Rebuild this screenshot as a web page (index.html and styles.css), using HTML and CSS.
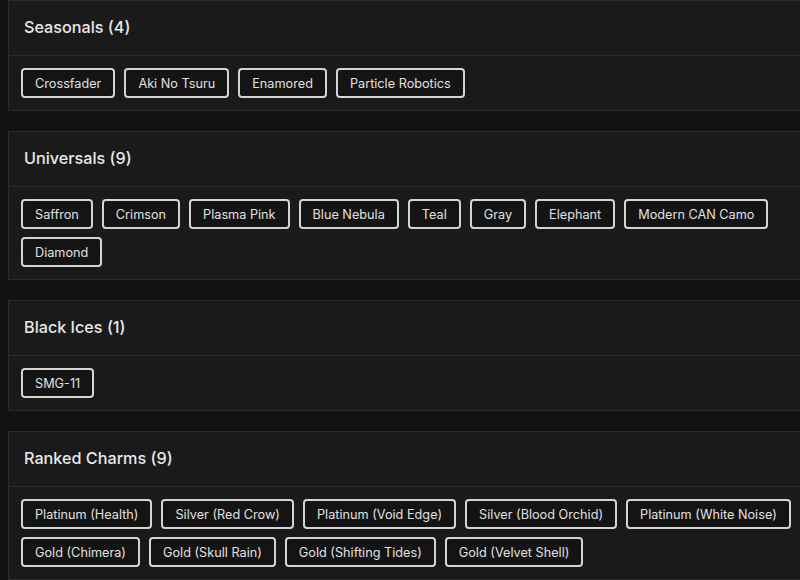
FILE: index.html
```html
<!DOCTYPE html>
<html lang="en">
<head>
<meta charset="utf-8">
<title>Collection</title>
<link rel="stylesheet" href="styles.css">
</head>
<body>
<main class="page">
  <section class="card">
    <header class="card-head"><h2 class="card-title">Seasonals (4)</h2></header>
    <div class="card-body">
      <span class="chip">Crossfader</span>
      <span class="chip">Aki No Tsuru</span>
      <span class="chip">Enamored</span>
      <span class="chip">Particle Robotics</span>
    </div>
  </section>
  <section class="card">
    <header class="card-head"><h2 class="card-title">Universals (9)</h2></header>
    <div class="card-body">
      <span class="chip">Saffron</span>
      <span class="chip">Crimson</span>
      <span class="chip">Plasma Pink</span>
      <span class="chip">Blue Nebula</span>
      <span class="chip">Teal</span>
      <span class="chip">Gray</span>
      <span class="chip">Elephant</span>
      <span class="chip">Modern CAN Camo</span>
      <span class="chip">Diamond</span>
    </div>
  </section>
  <section class="card">
    <header class="card-head"><h2 class="card-title">Black Ices (1)</h2></header>
    <div class="card-body">
      <span class="chip">SMG-11</span>
    </div>
  </section>
  <section class="card">
    <header class="card-head"><h2 class="card-title">Ranked Charms (9)</h2></header>
    <div class="card-body">
      <span class="chip">Platinum (Health)</span>
      <span class="chip">Silver (Red Crow)</span>
      <span class="chip">Platinum (Void Edge)</span>
      <span class="chip">Silver (Blood Orchid)</span>
      <span class="chip">Platinum (White Noise)</span>
      <span class="chip">Gold (Chimera)</span>
      <span class="chip">Gold (Skull Rain)</span>
      <span class="chip">Gold (Shifting Tides)</span>
      <span class="chip">Gold (Velvet Shell)</span>
    </div>
  </section>
</main>
</body>
</html>
```
FILE: styles.css
```css
html, body {
  margin: 0;
  padding: 0;
  background: #111111;
  overflow: hidden;
}
body {
  font-family: "Inter", "DejaVu Sans", sans-serif;
  color: #e4e4e4;
}
.page {
  padding: 0 0 0 8px;
  display: flex;
  flex-direction: column;
  gap: 20px;
}
.card {
  width: 830px;
  background: #1a1a1a;
  border: 1px solid #2b2b2b;
}
.card-head {
  height: 52px;
  padding: 0 15px 2px;
  display: flex;
  align-items: center;
  border-bottom: 1px solid #2b2b2b;
}
.card-title {
  margin: 0;
  font-size: 16.2px;
  font-weight: 500;
  color: #e8e8e8;
}
.card-body {
  padding: 12px;
  display: flex;
  flex-wrap: wrap;
  column-gap: 9px;
  row-gap: 8px;
}
.chip {
  display: inline-flex;
  align-items: center;
  height: 30px;
  box-sizing: border-box;
  padding: 0 12px;
  border: 2px solid #d4d4d4;
  border-radius: 4px;
  background: #141414;
  font-size: 12.7px;
  color: #e0e0e0;
  white-space: nowrap;
}
```
